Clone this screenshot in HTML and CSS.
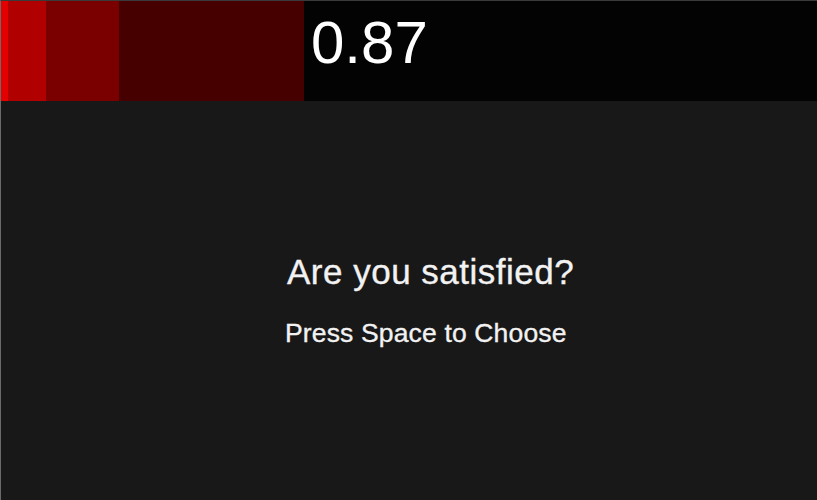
FILE: index.html
```html
<!DOCTYPE html>
<html>
<head>
<meta charset="utf-8">
<link rel="stylesheet" href="styles.css">
</head>
<body>
<div class="app">
  <header class="bar">
    <div class="seg seg1"></div>
    <div class="seg seg2"></div>
    <div class="seg seg3"></div>
    <div class="seg seg4"></div>
    <div class="score">0.87</div>
  </header>
  <main class="prompt">
    <div class="title">Are you satisfied?</div>
    <div class="hint">Press Space to Choose</div>
  </main>
</div>
</body>
</html>
```
FILE: styles.css
```css
html, body {
  margin: 0;
  padding: 0;
  width: 817px;
  height: 500px;
  overflow: hidden;
  background: #181818;
}
.app {
  box-sizing: border-box;
  width: 817px;
  height: 500px;
  border-top: 1px solid #3a3a3a;
  border-left: 1px solid #6a6a6a;
  display: flex;
  flex-direction: column;
  font-family: "Liberation Sans", Arial, sans-serif;
  color: #f2f2f2;
}
.bar {
  height: 100px;
  background: #030303;
  display: flex;
  flex-shrink: 0;
}
.seg { height: 100%; }
.seg1 { width: 7px; background: #e40000; }
.seg2 { width: 38px; background: #b00000; }
.seg3 { width: 73px; background: #7a0000; }
.seg4 { width: 185px; background: #460000; }
.score {
  font-size: 60px;
  line-height: 1;
  padding-top: 12px;
  padding-left: 7px;
  color: #ffffff;
}
.prompt {
  flex: 1;
  display: flex;
  flex-direction: column;
  align-items: flex-start;
  padding-left: 286px;
  padding-top: 153px;
  -webkit-text-stroke: 0.35px #f2f2f2;
}
.title {
  font-size: 35px;
  line-height: 1;
  letter-spacing: 0.5px;
}
.hint {
  font-size: 26.5px;
  line-height: 1;
  letter-spacing: 0.15px;
  margin-top: 31px;
  margin-left: -2px;
}
```
